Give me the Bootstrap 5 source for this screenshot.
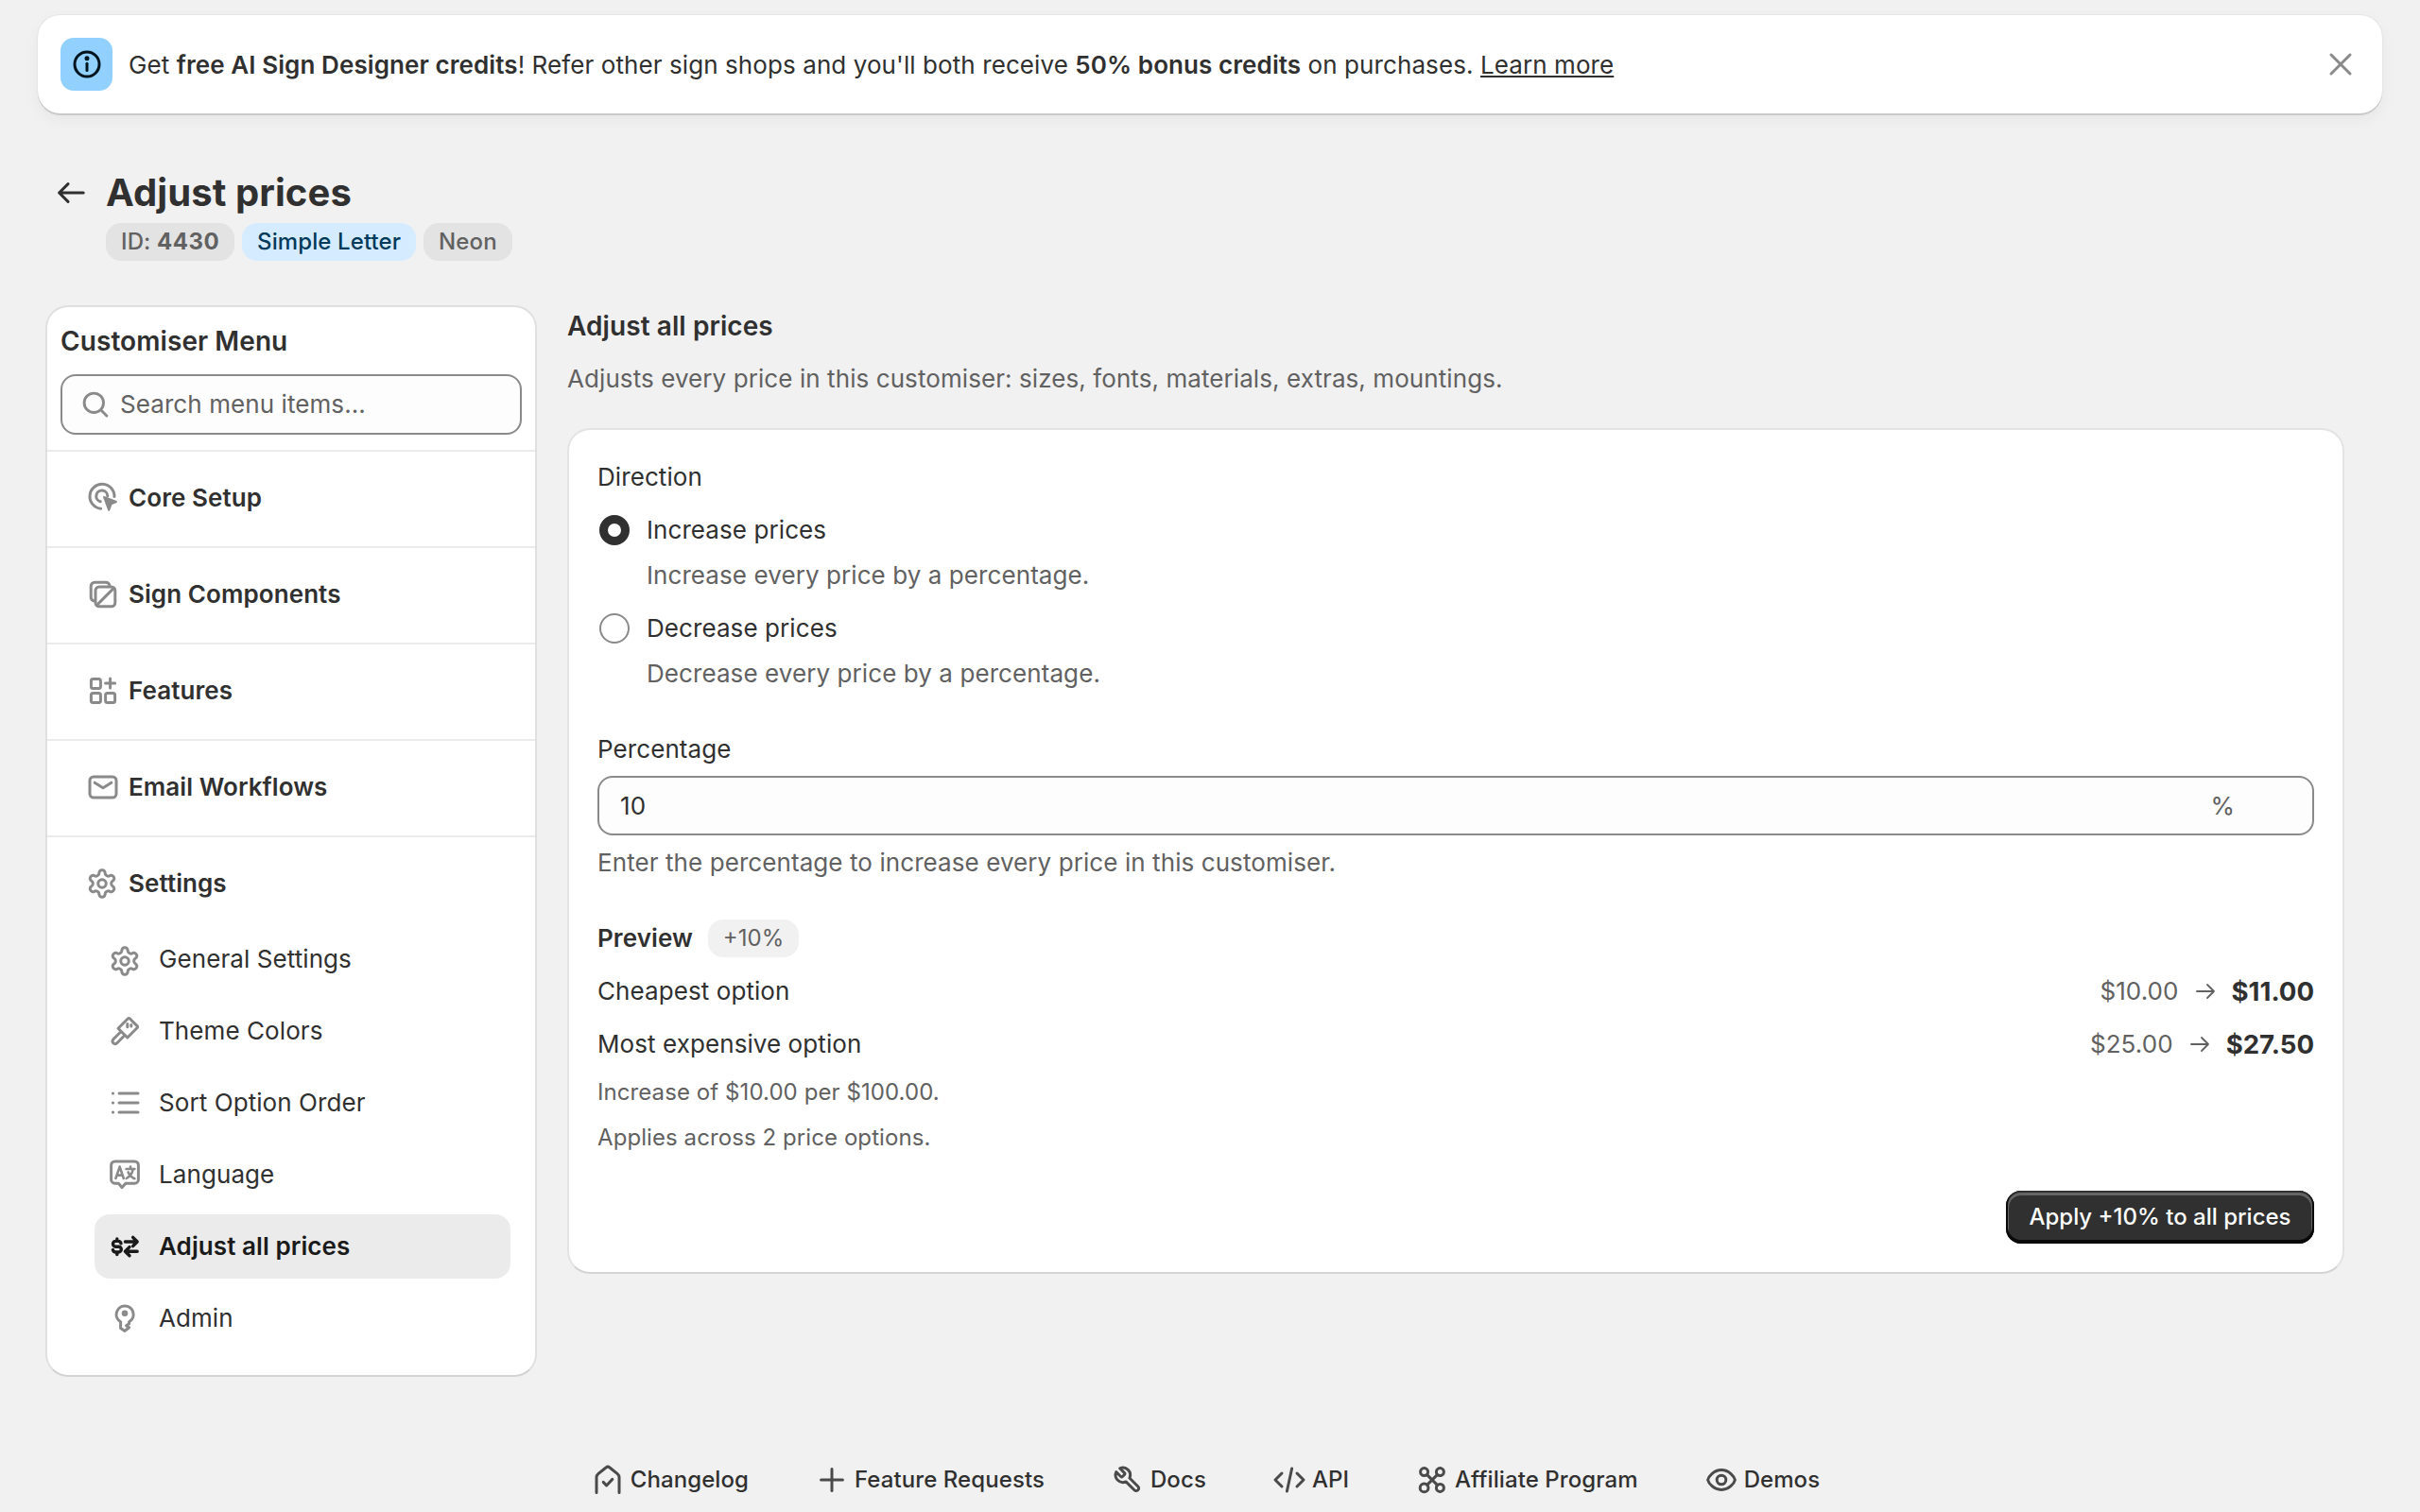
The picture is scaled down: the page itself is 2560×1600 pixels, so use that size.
<!DOCTYPE html>
<html lang="en">
<head>
<meta charset="utf-8">
<title>Adjust prices</title>
<link rel="stylesheet" href="https://cdn.jsdelivr.net/npm/bootstrap@5.3.0/dist/css/bootstrap.min.css">
<style>
body{background:#f1f1f1;color:#303030;font-family:Inter,"Liberation Sans",sans-serif;font-size:26px;line-height:40px;letter-spacing:.08px;min-height:1600px;overflow-x:hidden}
svg{flex:none;display:block;fill:none;stroke:currentColor;stroke-linecap:round;stroke-linejoin:round}
.promo{margin:16px 40px 0;height:104px;background:#fff;border-radius:24px;padding:0 24px;box-shadow:0 2px 0 #c9c9c9,0 0 0 1px #e6e6e6,0 6px 16px rgba(0,0,0,.05)}
.promo-icon{width:55px;height:56px;background:#91d0ff;border-radius:14px;color:#00141f}
.promo-text{margin-left:17px;padding-top:2px;letter-spacing:.085px}
.promo-text strong{font-weight:600}
.promo-text a{color:#303030}
.promo-close{background:none;border:0;padding:0;color:#8a8a8a}
.page-head{margin:60px 0 0 55px}
.back-link{color:#303030;width:45px;margin-top:4px}
.page-title{font-size:40px;line-height:48px;font-weight:700;margin:0}
.tag-row{margin-top:8px}
.tag{display:inline-block;height:40px;line-height:40px;border-radius:16px;padding:0 16px;background:#e3e3e3;color:#616161;font-size:24px;font-weight:500;letter-spacing:.1px}
.tag b{font-weight:700;letter-spacing:.5px}
.tag-info{background:#d5ebff;color:#003a5a}
.layout{margin:49px 80px 0 48px;align-items:flex-start}
.side-card{width:520px;flex:none;margin-top:-2px;border:2px solid #e0e0e0;border-bottom-color:#d4d4d4;border-radius:24px;background:#fff;padding-bottom:26px}
.side-head{padding:16px 14px 16px}
.side-title{font-size:28px;font-weight:600;line-height:40px;margin:0 0 15px}
.field{border:2px solid #8a8a8a;border-radius:16px;background:#fdfdfd;height:64px}
.field .form-control{border:0;background:transparent;box-shadow:none;font-size:26px;line-height:40px;color:#303030;padding:0;font-family:inherit;letter-spacing:inherit;border-radius:0}
.field .form-control::placeholder{color:#616161;opacity:1}
.search-field{padding:0 16px 0 18px}
.search-field svg{color:#8a8a8a;margin-right:9px}
.menu-row{border-top:2px solid #ebebeb;padding:29px 0 31px 39px;font-weight:600;color:#303030;text-decoration:none;height:102px}
.menu-row svg{color:#8a8a8a;margin-right:7px}
.settings-row{border-top:2px solid #ebebeb;padding:29px 0 26px 41px;font-weight:600}
.settings-row svg{color:#8a8a8a;margin-right:11px}
.sub-list{padding:0 26px 0 50px;gap:8px}
.sub-row{height:68px;border-radius:16px;padding:0 12px;color:#303030;text-decoration:none}
.sub-row svg{color:#8a8a8a;margin-right:16px}
.sub-row .gear-icon{margin:4px 19px 0 3px}
.sub-row.is-on{background:#ebebeb;font-weight:600;color:#1a1a1a}
.sub-row.is-on svg{color:#1a1a1a}
.main-pane{flex:1;margin-left:32px;min-width:0}
.pane-title{font-size:28px;font-weight:600;line-height:40px;margin:0}
.pane-sub{color:#616161;margin:16px 0 32px;line-height:40px}
.main-card{border:2px solid #e3e3e3;border-bottom-color:#d4d4d4;border-radius:24px;background:#fff;padding:30px}
.radio-row{margin-top:16px}
.radio-row .form-check-input{width:32px;height:32px;margin:0 18px 0 2px;border:2px solid #8a8a8a;background-color:#fff;background-image:none;box-shadow:none;flex:none}
.radio-row .form-check-input:checked{border:9px solid #303030;background-color:#fff;background-image:none}
.muted{color:#616161}
.radio-desc{margin:8px 0 0 52px}
.pct-label{margin-top:40px}
.pct-field{height:63px;margin-top:8px;padding:0 82px 0 22px}
.pct-suffix{color:#616161}
.help-line{margin-top:9px}
.preview-head{margin-top:40px}
.preview-head b{font-weight:600;font-size:26px}
.preview-pill{display:inline-block;height:40px;line-height:40px;padding:0 16px;margin-left:16px;border-radius:16px;background:#f1f1f1;color:#616161;font-size:24px;letter-spacing:0}
.price-row{margin-top:16px}
.price-old{color:#616161;font-size:26px}
.price-new{font-weight:650;font-size:27.6px;color:#303030;letter-spacing:0}
.price-arrow{color:#616161;margin:0 16px}
.note-line{font-size:24px;line-height:32px;color:#616161;margin-top:15px}
.note-line + .note-line{margin-top:16px}
.apply-btn{margin-top:40px;background:#303030;color:#fff;font-size:24px;font-weight:500;line-height:32px;height:56px;width:326px;padding:0;border:0;border-radius:16px;box-shadow:inset 0 -2px 0 2px rgba(0,0,0,.8),inset 0 0 0 2px #303030,inset 0 2px 0 3px rgba(255,255,255,.25)}
.apply-btn:hover{background:#303030;color:#fff}
.foot-bar{margin-top:89px;padding-right:12px;gap:68px;height:40px}
.foot-link{color:#303030;text-decoration:none;font-weight:500;gap:4px;font-size:24px}
.foot-link svg{color:#4a4a4a}
</style>
</head>
<body>
<div class="promo d-flex align-items-center">
  <div class="promo-icon d-flex align-items-center justify-content-center">
    <svg width="40" height="40" viewBox="0 0 20 20" stroke-width="1.5"><circle cx="10" cy="10" r="6.5"/><path d="M10 9.6v3.6"/><circle cx="10" cy="6.9" r=".5" fill="currentColor"/></svg>
  </div>
  <div class="promo-text flex-grow-1">Get <strong>free AI Sign Designer credits</strong>! Refer other sign shops and you'll both receive <strong>50% bonus credits</strong> on purchases. <a href="#">Learn more</a></div>
  <button class="promo-close" type="button" aria-label="Close"><svg width="40" height="40" viewBox="0 0 20 20" stroke-width="1.5"><path d="M5 5 15 15M15 5 5 15"/></svg></button>
</div>

<div class="page-head d-flex">
  <a class="back-link d-block" href="#"><svg width="40" height="40" viewBox="0 0 20 20" stroke-width="1.5"><path d="M16.6 10H3.8M8.5 5.300 3.800 10l4.700 4.700"/></svg></a>
  <div class="ms-2 ps-1">
    <h1 class="page-title">Adjust prices</h1>
    <div class="tag-row d-flex gap-2">
      <span class="tag">ID: <b>4430</b></span>
      <span class="tag tag-info">Simple Letter</span>
      <span class="tag">Neon</span>
    </div>
  </div>
</div>

<div class="layout d-flex">
  <aside class="side-card">
    <div class="side-head">
      <h2 class="side-title">Customiser Menu</h2>
      <div class="field search-field d-flex align-items-center">
        <svg width="34" height="34" viewBox="0 0 20 20" stroke-width="1.7"><circle cx="9" cy="9" r="6"/><path d="M13.500 13.500l3.500 3.500"/></svg>
        <input class="form-control" type="text" placeholder="Search menu items...">
      </div>
    </div>
    <a href="#" class="menu-row d-flex align-items-center">
      <svg width="40" height="40" viewBox="0 0 20 20" stroke-width="1.5"><path d="M16 9.2A6.5 6.5 0 1 0 8.8 15.6"/><path d="M12.4 9A3 3 0 1 0 8.600 11.900"/><path d="M10.500 9.500 17 12l-2.700 1.200-1.200 3.200z" fill="currentColor" stroke-width="1"/></svg>
      Core Setup
    </a>
    <a href="#" class="menu-row d-flex align-items-center">
      <svg width="40" height="40" viewBox="0 0 20 20" stroke-width="1.5"><path d="M5 13.400A2 2 0 0 1 3.600 11.500V5.600a2 2 0 0 1 2-2h5.900A2 2 0 0 1 13.400 5"/><rect x="6" y="6" width="10.400" height="10.400" rx="2"/><path d="M7.200 15.200 15.200 7.200"/></svg>
      Sign Components
    </a>
    <a href="#" class="menu-row d-flex align-items-center">
      <svg width="40" height="40" viewBox="0 0 20 20" stroke-width="1.5"><rect x="3.700" y="3.700" width="5" height="5" rx="1"/><rect x="3.700" y="11.300" width="5" height="5" rx="1"/><rect x="11.300" y="11.300" width="5" height="5" rx="1"/><path d="M13.800 3.500v5M11.300 6h5"/></svg>
      Features
    </a>
    <a href="#" class="menu-row d-flex align-items-center">
      <svg width="40" height="40" viewBox="0 0 20 20" stroke-width="1.5"><rect x="3" y="4.500" width="14" height="11" rx="2"/><path d="M5.600 7.600 10 10.400l4.400-2.800"/></svg>
      Email Workflows
    </a>
    <div class="settings-row d-flex align-items-center">
      <svg width="34" height="34" viewBox="0 0 24 24" stroke-width="2.100"><use href="#gear"/></svg>
      Settings
    </div>
    <nav class="sub-list d-flex flex-column">
      <a href="#" class="sub-row d-flex align-items-center"><svg class="gear-icon" width="34" height="34" viewBox="0 0 24 24" stroke-width="2.100"><use href="#gear"/></svg>General Settings</a>
      <a href="#" class="sub-row d-flex align-items-center"><svg width="40" height="40" viewBox="0 0 20 20" stroke-width="1.500"><path d="M6.500 8.600 11.600 3.500a.8.8 0 0 1 1.100 0l3.800 3.800a.8.8 0 0 1 0 1.100l-5.100 5.100z"/><path d="M11.400 6.200v1.700M13.400 6.800v.7"/><path d="M7.700 10.600 3.900 14.400a1.400 1.400 0 0 0 2 2L9.600 12.600"/></svg>Theme Colors</a>
      <a href="#" class="sub-row d-flex align-items-center"><svg width="40" height="40" viewBox="0 0 20 20" stroke-width="1.500"><path d="M7 5h10M7 10h10M7 15h10M3.700 5h.1M3.700 10h.1M3.700 15h.1"/></svg>Sort Option Order</a>
      <a href="#" class="sub-row d-flex align-items-center"><svg width="40" height="40" viewBox="0 0 20 20" stroke-width="1.500"><path d="M4.800 3H15.200a2 2 0 0 1 2 2V12.600a2 2 0 0 1-2 2H10.500L8.500 16.800 6.700 14.600H4.800a2 2 0 0 1-2-2V5a2 2 0 0 1 2-2z"/><path d="M5.200 12 7.300 5.800l2.100 6.200M5.900 10.300h2.800M10.800 7h4.400M13 5.800V7M14.400 7c-.4 2.200-1.800 4-3.500 5M11.800 8.700c.6 1.500 1.900 2.700 3.400 3.400" stroke-width="1.300"/></svg>Language</a>
      <a href="#" class="sub-row is-on d-flex align-items-center"><svg width="40" height="40" viewBox="0 0 20 20" stroke-width="1.700"><path d="M8 8.400A1.600 1.600 0 0 0 6.500 7.200H5.200a1.400 1.400 0 0 0 0 2.900h1.500a1.400 1.400 0 0 1 0 2.900H5.300a1.600 1.600 0 0 1-1.600-1.200M5.900 6v1.200M5.900 13v1.300"/><path d="M10.200 7.500h6.400M14.300 5.200l2.300 2.300-2.300 2.300M16.600 12.600h-6.400M12.500 10.300l-2.300 2.300 2.300 2.300"/></svg>Adjust all prices</a>
      <a href="#" class="sub-row d-flex align-items-center"><svg width="40" height="40" viewBox="0 0 20 20" stroke-width="1.500"><path d="M10 3.500a4.500 4.500 0 0 0-2.200 8.400v3.300l2.200 1.500 2.300-1.800-1.500-1 1.500-1v-1A4.500 4.500 0 0 0 10 3.500z"/><circle cx="10" cy="7.400" r=".9"/></svg>Admin</a>
    </nav>
  </aside>

  <main class="main-pane">
    <h2 class="pane-title">Adjust all prices</h2>
    <p class="pane-sub">Adjusts every price in this customiser: sizes, fonts, materials, extras, mountings.</p>
    <section class="main-card">
      <div>Direction</div>
      <label class="radio-row d-flex align-items-center"><input class="form-check-input" type="radio" name="dir" checked>Increase prices</label>
      <div class="radio-desc muted">Increase every price by a percentage.</div>
      <label class="radio-row d-flex align-items-center"><input class="form-check-input" type="radio" name="dir">Decrease prices</label>
      <div class="radio-desc muted">Decrease every price by a percentage.</div>
      <div class="pct-label">Percentage</div>
      <div class="field pct-field d-flex align-items-center">
        <input class="form-control" type="text" value="10">
        <span class="pct-suffix">%</span>
      </div>
      <div class="help-line muted">Enter the percentage to increase every price in this customiser.</div>
      <div class="preview-head d-flex align-items-center"><b>Preview</b><span class="preview-pill">+10%</span></div>
      <div class="price-row d-flex justify-content-between align-items-center">
        <span>Cheapest option</span>
        <span class="d-flex align-items-center"><span class="price-old">$10.00</span><svg class="price-arrow" width="24" height="24" viewBox="0 0 12 12" stroke-width=".9"><path d="M1.500 6h9M7 2.500 10.500 6 7 9.500"/></svg><span class="price-new">$11.00</span></span>
      </div>
      <div class="price-row d-flex justify-content-between align-items-center">
        <span>Most expensive option</span>
        <span class="d-flex align-items-center"><span class="price-old">$25.00</span><svg class="price-arrow" width="24" height="24" viewBox="0 0 12 12" stroke-width=".9"><path d="M1.500 6h9M7 2.500 10.500 6 7 9.500"/></svg><span class="price-new">$27.50</span></span>
      </div>
      <div class="note-line">Increase of $10.00 per $100.00.</div>
      <div class="note-line">Applies across 2 price options.</div>
      <div class="d-flex justify-content-end"><button class="btn apply-btn" type="button">Apply +10% to all prices</button></div>
    </section>
  </main>
</div>

<footer class="foot-bar d-flex justify-content-center align-items-center">
  <a href="#" class="foot-link d-flex align-items-center"><svg width="40" height="40" viewBox="0 0 20 20" stroke-width="1.500"><path d="M4 16.800V8.600c0-.8.300-1.300.9-1.800L9 3.500a1.500 1.500 0 0 1 2 0l4.100 3.300c.6.500.9 1 .9 1.800v8.200"/><path d="M7.600 11.200l1.700 1.800 3.100-3.300"/></svg>Changelog</a>
  <a href="#" class="foot-link d-flex align-items-center"><svg width="40" height="40" viewBox="0 0 20 20" stroke-width="1.500"><path d="M10 4.300v11.400M4.300 10h11.400"/></svg>Feature Requests</a>
  <a href="#" class="foot-link d-flex align-items-center"><svg width="40" height="40" viewBox="-3.500 -3.500 31 31" stroke-width="2.300"><path transform="translate(24 0) scale(-1 1)" d="M14.700 6.300a1 1 0 0 0 0 1.400l1.600 1.600a1 1 0 0 0 1.400 0l3.770-3.770a6 6 0 0 1-7.940 7.940l-6.910 6.910a2.120 2.120 0 0 1-3-3l6.910-6.910a6 6 0 0 1 7.940-7.940l-3.760 3.760z"/></svg>Docs</a>
  <a href="#" class="foot-link d-flex align-items-center"><svg width="40" height="40" viewBox="0 0 20 20" stroke-width="1.500"><path d="M6 6.500 2.500 10 6 13.500M14 6.500 17.500 10 14 13.500M11.300 4 8.700 16"/></svg>API</a>
  <a href="#" class="foot-link d-flex align-items-center"><svg width="40" height="40" viewBox="0 0 20 20" stroke-width="1.500"><circle cx="5.800" cy="5.800" r="2"/><circle cx="14.200" cy="5.800" r="2"/><circle cx="5.800" cy="14.200" r="2.200"/><circle cx="14.200" cy="14.200" r="2"/><path d="M7.300 7.300l5.400 5.400M12.700 7.300l-5.400 5.400"/></svg>Affiliate Program</a>
  <a href="#" class="foot-link d-flex align-items-center"><svg width="40" height="40" viewBox="0 0 20 20" stroke-width="1.500"><path d="M10 4.800c-4.200 0-6.800 3.500-7.200 5.200.4 1.700 3 5.200 7.200 5.200s6.800-3.500 7.200-5.200c-.4-1.700-3-5.200-7.200-5.200z"/><circle cx="10" cy="10" r="2.400"/></svg>Demos</a>
</footer>

<svg width="0" height="0" class="position-absolute"><defs><g id="gear"><path d="M12.220 2h-.44a2 2 0 0 0-2 2v.18a2 2 0 0 1-1 1.730l-.43.250a2 2 0 0 1-2 0l-.15-.080a2 2 0 0 0-2.730.730l-.22.380a2 2 0 0 0 .730 2.730l.15.100a2 2 0 0 1 1 1.720v.510a2 2 0 0 1-1 1.740l-.15.090a2 2 0 0 0-.730 2.730l.22.380a2 2 0 0 0 2.730.730l.15-.080a2 2 0 0 1 2 0l.43.250a2 2 0 0 1 1 1.730V20a2 2 0 0 0 2 2h.44a2 2 0 0 0 2-2v-.18a2 2 0 0 1 1-1.730l.43-.25a2 2 0 0 1 2 0l.15.080a2 2 0 0 0 2.730-.730l.22-.39a2 2 0 0 0-.730-2.730l-.15-.080a2 2 0 0 1-1-1.740v-.5a2 2 0 0 1 1-1.740l.15-.090a2 2 0 0 0 .730-2.730l-.22-.38a2 2 0 0 0-2.730-.730l-.15.080a2 2 0 0 1-2 0l-.43-.25a2 2 0 0 1-1-1.730V4a2 2 0 0 0-2-2z"/><circle cx="12" cy="12" r="3"/></g></defs></svg>
<script src="https://cdn.jsdelivr.net/npm/bootstrap@5.3.0/dist/js/bootstrap.bundle.min.js"></script>
</body>
</html>
